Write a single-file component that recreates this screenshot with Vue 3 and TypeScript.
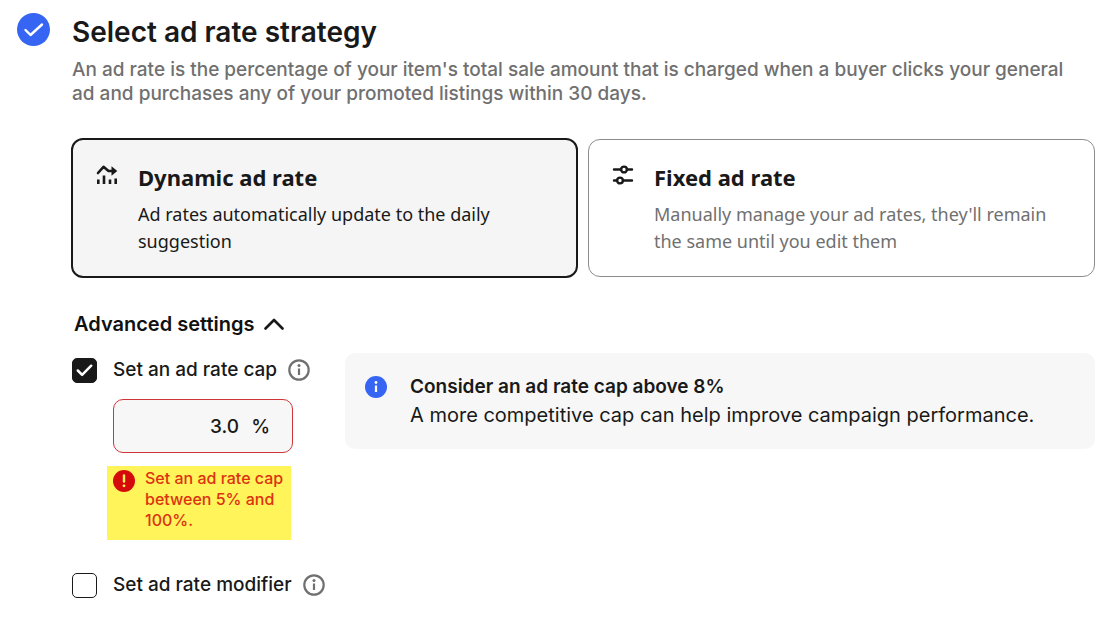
<script setup lang="ts">
import { ref } from 'vue'

type Strategy = 'dynamic' | 'fixed'

const strategy = ref<Strategy>('dynamic')
const advancedOpen = ref(true)
const capEnabled = ref(true)
const modifierEnabled = ref(false)
const cap = ref('3.0')
</script>

<template>
  <main class="step">
    <svg class="step-icon" viewBox="0 0 33 33" aria-hidden="true">
      <circle cx="16.5" cy="16.5" r="16.5" fill="#3665f3" />
      <path d="M8.500 17l5 5L25 11.500" fill="none" stroke="#fff" stroke-width="2.400" stroke-linecap="round" stroke-linejoin="round" />
    </svg>

    <div class="content">
      <h1>Select ad rate strategy</h1>
      <p class="intro">
        An ad rate is the percentage of your item's total sale amount that is charged when a buyer clicks your general
        ad and purchases any of your promoted listings within 30 days.
      </p>

      <div class="cards" role="radiogroup" aria-label="Ad rate strategy">
        <label class="card" :class="{ selected: strategy === 'dynamic' }">
          <input v-model="strategy" class="card-radio" type="radio" name="strategy" value="dynamic" />
          <svg class="card-icon" viewBox="0 0 22 22" aria-hidden="true">
            <g fill="none" stroke="#191919" stroke-width="2.600">
              <path d="M2 9L7.500 2.800l5 4.200h5" stroke-linejoin="round" stroke-linecap="round" />
              <path d="M2.300 15.500v4.500M8 11.500v8.500M14 15.500v4.500M19.700 14.500v5.500" />
            </g>
            <path d="M15.500 2.200l5.800 4.800-5.800 4.800z" fill="#191919" />
          </svg>
          <span class="card-body">
            <span class="card-title">Dynamic ad rate</span>
            <span class="card-text">Ad rates automatically update to the daily suggestion</span>
          </span>
        </label>
        <label class="card" :class="{ selected: strategy === 'fixed' }">
          <input v-model="strategy" class="card-radio" type="radio" name="strategy" value="fixed" />
          <svg class="card-icon" viewBox="0 0 22 22" aria-hidden="true">
            <g fill="none" stroke="#191919" stroke-width="2.400">
              <path d="M2 5.500h7M15 5.500h5M2 16.500h3M11 16.500h9" stroke-linecap="round" />
              <circle cx="12" cy="5.500" r="2.900" />
              <circle cx="8" cy="16.500" r="2.900" />
            </g>
          </svg>
          <span class="card-body">
            <span class="card-title">Fixed ad rate</span>
            <span class="card-text">Manually manage your ad rates, they'll remain the same until you edit them</span>
          </span>
        </label>
      </div>

      <button class="toggle" type="button" :aria-expanded="advancedOpen" @click="advancedOpen = !advancedOpen">
        Advanced settings
        <svg class="chevron" :class="{ closed: !advancedOpen }" viewBox="0 0 20 12" aria-hidden="true">
          <path d="M1.500 10.500L10 2l8.500 8.500" fill="none" stroke="#191919" stroke-width="2.600" stroke-linecap="round" stroke-linejoin="round" />
        </svg>
      </button>

      <div v-if="advancedOpen" class="settings">
        <div class="options">
          <div class="option">
            <input id="cap-enabled" v-model="capEnabled" class="check" type="checkbox" />
            <label for="cap-enabled">Set an ad rate cap</label>
            <button class="info" type="button" aria-label="About the ad rate cap">
              <svg viewBox="0 0 22 22" aria-hidden="true">
                <circle cx="11" cy="11" r="9.700" fill="none" stroke="#707070" stroke-width="2.200" />
                <path d="M11 9.500v6.500" stroke="#707070" stroke-width="2.200" />
                <circle cx="11" cy="6.500" r="1.500" fill="#707070" />
              </svg>
            </button>
          </div>

          <div class="rate-field">
            <input v-model="cap" type="text" inputmode="decimal" aria-label="Ad rate cap, percent" aria-invalid="true" aria-describedby="cap-error" />
            <span>%</span>
          </div>

          <div id="cap-error" class="error" role="alert">
            <svg class="error-icon" viewBox="0 0 22 22" aria-hidden="true">
              <circle cx="11" cy="11" r="11" fill="#d50b0b" />
              <path d="M11 5.500v6" stroke="#fff45a" stroke-width="2.400" stroke-linecap="round" />
              <circle cx="11" cy="15.800" r="1.400" fill="#fff45a" />
            </svg>
            <span>Set an ad rate cap between 5% and 100%.</span>
          </div>

          <div class="option">
            <input id="modifier-enabled" v-model="modifierEnabled" class="check" type="checkbox" />
            <label for="modifier-enabled">Set ad rate modifier</label>
            <button class="info" type="button" aria-label="About the ad rate modifier">
              <svg viewBox="0 0 22 22" aria-hidden="true">
                <circle cx="11" cy="11" r="9.700" fill="none" stroke="#707070" stroke-width="2.200" />
                <path d="M11 9.500v6.500" stroke="#707070" stroke-width="2.200" />
                <circle cx="11" cy="6.500" r="1.500" fill="#707070" />
              </svg>
            </button>
          </div>
        </div>

        <aside class="notice">
          <svg class="notice-icon" viewBox="0 0 22 22" aria-hidden="true">
            <circle cx="11" cy="11" r="11" fill="#3665f3" />
            <path d="M11 9.500v6.500" stroke="#fff" stroke-width="2.200" />
            <circle cx="11" cy="6.500" r="1.400" fill="#fff" />
          </svg>
          <div>
            <strong>Consider an ad rate cap above 8%</strong>
            <p>A more competitive cap can help improve campaign performance.</p>
          </div>
        </aside>
      </div>
    </div>
  </main>
</template>

<style>
body {
  margin: 0;
  background: #fff;
}
</style>

<style scoped>
.step {
  display: grid;
  grid-template-columns: 33px minmax(0, 1fr);
  column-gap: 21px;
  padding: 13px 14px 24px 17px;
  color: #191919;
  font-family: Inter, "Liberation Sans", sans-serif;
  font-size: 19px;
  font-weight: 500;
}
.step *,
.step {
  box-sizing: border-box;
}
.step-icon {
  width: 33px;
  height: 33px;
}
h1 {
  margin: 0 0 7px 1px;
  font-size: 28px;
  line-height: 38px;
  font-weight: 600;
}
.intro {
  margin: 0 0 32px 1px;
  padding-right: 16px;
  color: #707070;
  line-height: 24px;
}
.cards {
  display: grid;
  grid-template-columns: 1fr 1fr;
  gap: 10px;
}
.card {
  display: flex;
  align-items: flex-start;
  gap: 20px;
  margin: 1px 0;
  padding: 22px 23px 21px;
  border: 1px solid #8c8c8c;
  border-radius: 12px;
  font-family: "Noto Sans", sans-serif;
  font-weight: 400;
  cursor: pointer;
}
.card.selected {
  margin: 0;
  border: 2px solid #191919;
  background: #f5f5f5;
}
.card-radio {
  position: absolute;
  opacity: 0;
  pointer-events: none;
}
.card-icon {
  flex: none;
  width: 22px;
  height: 22px;
  margin-top: 2px;
}
.card-title,
.card-text {
  display: block;
}
.card-title {
  margin-bottom: 8px;
  font-size: 22px;
  line-height: 31px;
  font-weight: 700;
}
.card-text {
  color: #707070;
  font-size: 18px;
  line-height: 27px;
}
.selected .card-text {
  color: #191919;
}
.toggle {
  display: flex;
  align-items: center;
  gap: 10px;
  margin: 34px 0 17px 3px;
  padding: 0;
  border: 0;
  background: none;
  color: #111;
  font: 600 20px/24px Inter, "Liberation Sans", sans-serif;
  cursor: pointer;
}
.chevron {
  width: 20px;
  height: 12px;
}
.chevron.closed {
  transform: rotate(180deg);
}
.settings {
  display: grid;
  grid-template-columns: 256px minmax(0, 1fr);
  column-gap: 18px;
  align-items: start;
}
.options {
  padding-top: 4px;
}
.option {
  display: flex;
  align-items: center;
  line-height: 26px;
  white-space: nowrap;
}
.check {
  flex: none;
  appearance: none;
  width: 25px;
  height: 25px;
  margin: 0 16px 0 1px;
  border: 1px solid #191919;
  border-radius: 5px;
  background: #fff;
}
.check:checked {
  background: #191919 url("data:image/svg+xml,%3Csvg xmlns='http://www.w3.org/2000/svg' viewBox='0 0 24 24'%3E%3Cpath d='M5 12l4.500 4.500L19 7' fill='none' stroke='white' stroke-width='2.600' stroke-linecap='round' stroke-linejoin='round'/%3E%3C/svg%3E") center / contain no-repeat;
}
.info {
  margin-left: 11px;
  padding: 0;
  border: 0;
  background: none;
}
.info svg {
  display: block;
  width: 22px;
  height: 22px;
}
.rate-field {
  display: flex;
  align-items: center;
  gap: 12px;
  width: 180px;
  height: 54px;
  margin: 16px 0 13px 42px;
  padding: 0 22px 0 16px;
  border: 1px solid #d0353a;
  border-radius: 10px;
  background: #f7f7f7;
}
.rate-field input {
  flex: 1;
  min-width: 0;
  padding: 0;
  border: 0;
  outline: 0;
  background: none;
  color: inherit;
  font: inherit;
  text-align: right;
}
.error {
  display: flex;
  align-items: flex-start;
  gap: 10px;
  width: 184px;
  margin: 0 0 32px 36px;
  padding: 2px 0 9px 6px;
  background: #fff45a;
  color: #dd3210;
  font-size: 16px;
  line-height: 21px;
}
.error-icon {
  flex: none;
  width: 22px;
  height: 22px;
  margin-top: 2px;
}
.notice {
  display: flex;
  align-items: flex-start;
  gap: 23px;
  padding: 19px 20px;
  border-radius: 10px;
  background: #f7f7f7;
  line-height: 29px;
}
.notice-icon {
  flex: none;
  width: 22px;
  height: 22px;
  margin-top: 4px;
}
.notice strong {
  font-weight: 600;
}
.notice p {
  margin: 0;
  font-size: 20px;
  font-weight: 400;
}
</style>
